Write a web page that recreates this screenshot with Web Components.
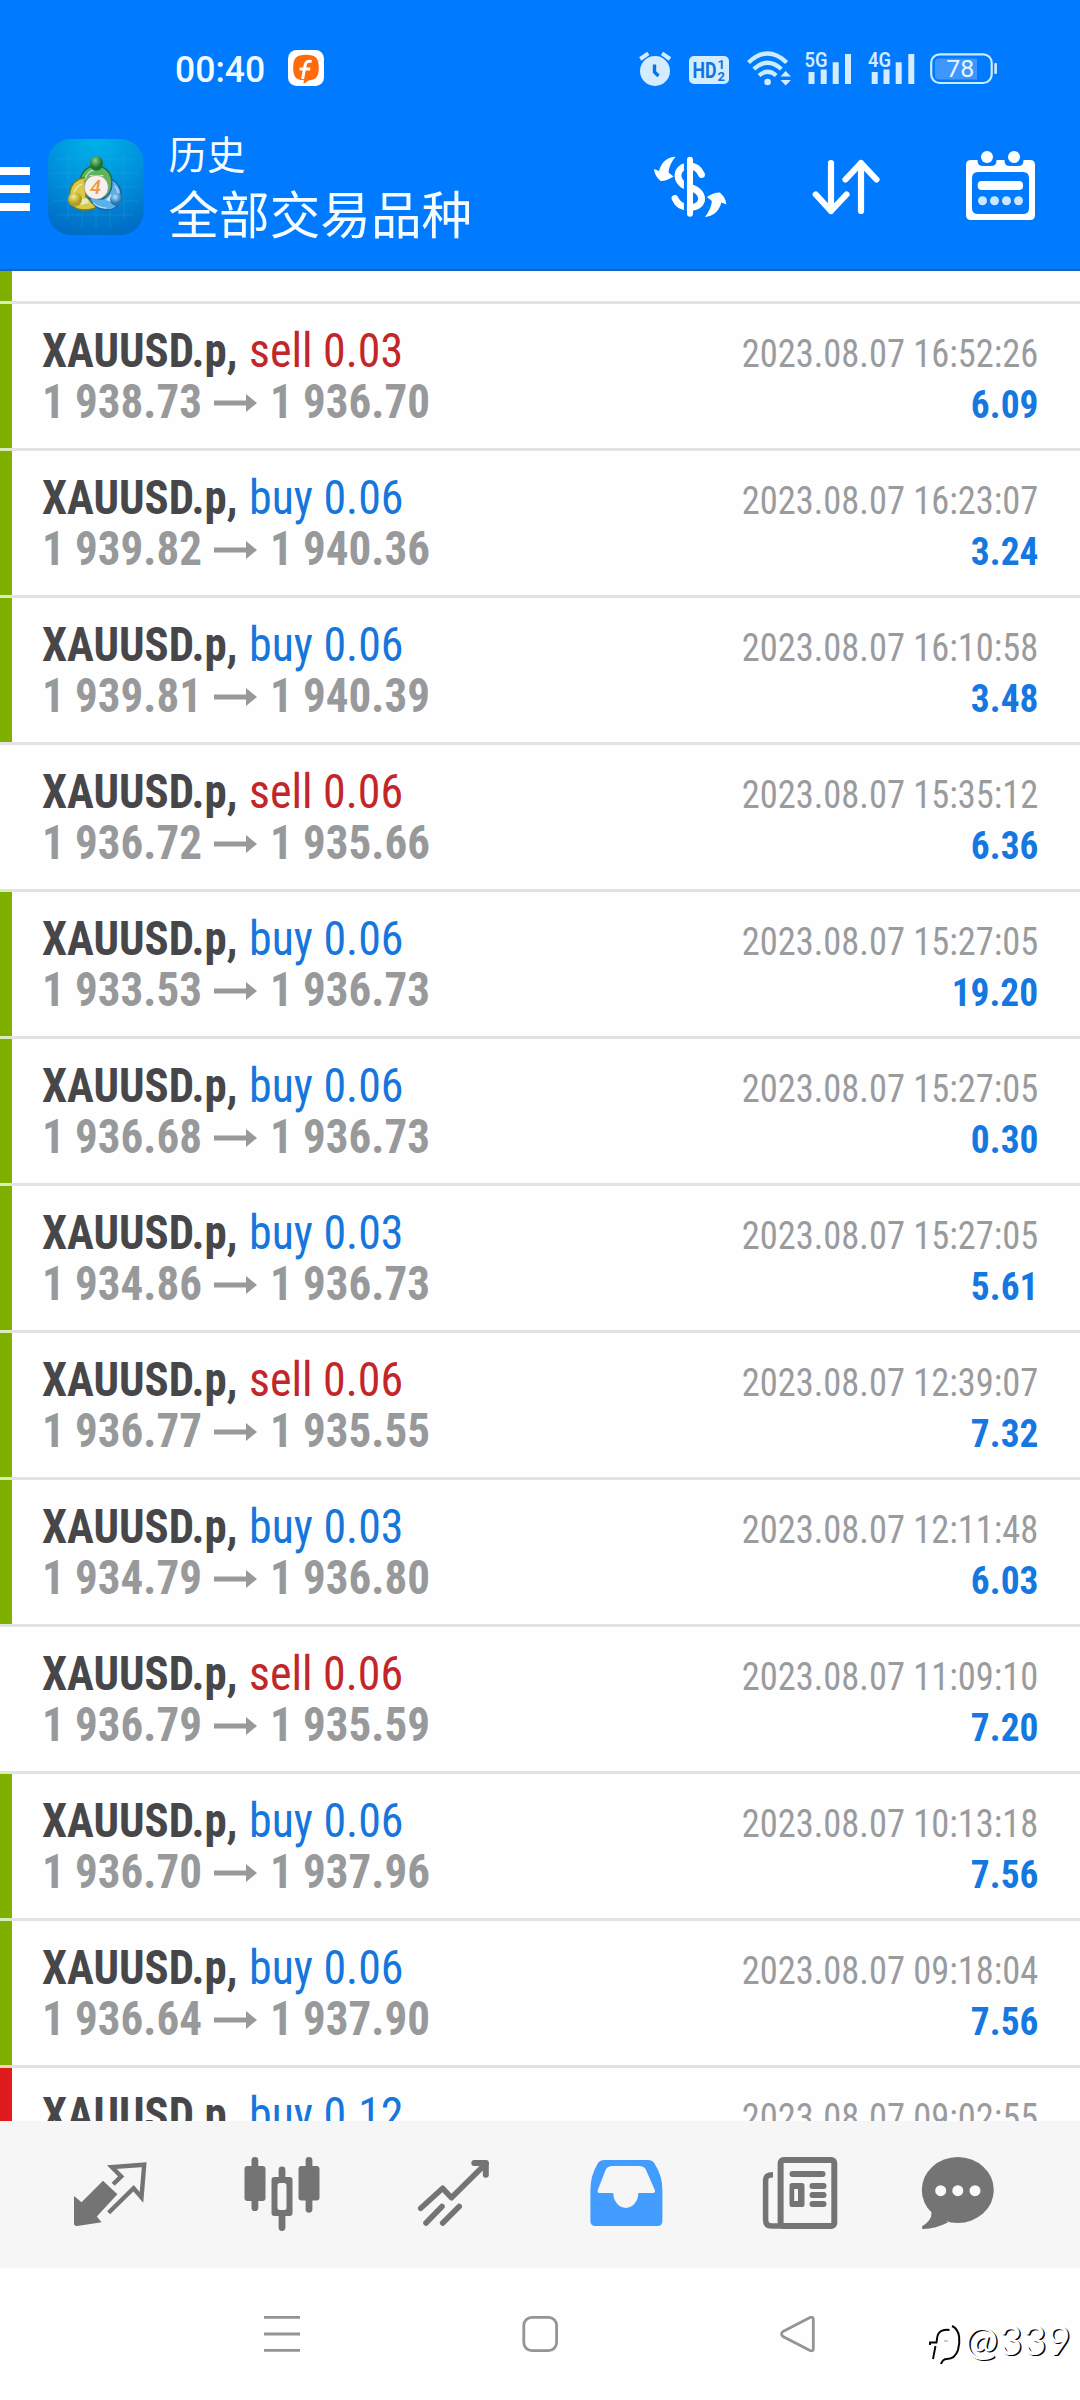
<!DOCTYPE html>
<html lang="zh-CN">
<head>
<meta charset="utf-8">
<title>历史</title>
<style>
html,body{margin:0;padding:0}
body{width:1080px;height:2400px;overflow:hidden;background:#fefefe;font-family:Roboto,"Noto Sans CJK SC",sans-serif}
</style>
</head>
<body>
<history-app></history-app>
<script>
const FONT = '"Roboto Condensed",Roboto,sans-serif';

// Horizontal scale for each text style, from a sample string and the ink width it should have.
const STYLES = {
  sym:   {weight:700, size:48, sample:'XAUUSD.p,', ink:193},
  side:  {weight:400, size:48, sample:'buy 0.06', ink:150},
  price: {weight:700, size:48, sample:'1 938.73', ink:155},
  date:  {weight:400, size:39, sample:'2023.08.07 16:52:26', ink:294.5},
  sum:   {weight:700, size:39, sample:'6.09', ink:65}
};
const ctx = document.createElement('canvas').getContext('2d');
for (const s of Object.values(STYLES)) {
  ctx.font = `${s.weight} ${s.size}px ${FONT}`;
  if ('fontStretch' in ctx) ctx.fontStretch = 'condensed';
  const m = ctx.measureText(s.sample);
  s.scale = s.ink / (m.actualBoundingBoxLeft + m.actualBoundingBoxRight);
}

function define(name, html) {
  customElements.define(name, class extends HTMLElement {
    constructor() {
      super();
      this.attachShadow({mode:'open'}).innerHTML = typeof html === 'function' ? '' : html;
    }
    connectedCallback() {
      if (typeof html === 'function') this.shadowRoot.innerHTML = html(this);
    }
  });
}

define('condensed-text', el => {
  const s = STYLES[el.getAttribute('kind')];
  return `<style>
    :host{display:block;white-space:pre;font:${s.weight} ${s.size}px/51px ${FONT};font-stretch:75%}
    span{display:inline-block;transform:scaleX(${s.scale.toFixed(4)});transform-origin:var(--origin,left) center}
  </style><span><slot></slot></span>`;
});

define('status-bar', `<style>
  :host{display:flex;height:136px;box-sizing:border-box;padding-top:40px}
  .time{width:112px;margin-left:175px;font:500 37px/60px Roboto,sans-serif;color:#f2faff}
  .time span{display:inline-block;transform:scaleX(.96);transform-origin:left}
  svg{display:block;flex:none}
  .badge{margin:9px 0 0 0}
  .sys{margin-left:295px}
  text{font-family:Roboto,sans-serif}
</style>
<div class="time"><span>00:40</span></div>
<svg class="badge" width="38" height="38" viewBox="287 49 38 38">
  <rect x="288" y="50" width="36" height="36" rx="8.5" fill="#fff"/>
  <path d="M306 54.800c9.500 0 12.800 3.200 12.800 12.700s-3.300 12.700-9.800 12.700l-5.500 3.800.5-3.700c-8.300 0-10.800-3.800-10.800-12.800 0-9.500 3.300-12.700 12.800-12.700z" fill="#ff6a0c"/>
  <path d="M311.600 61.500c-3.800-1.100-5.800.4-6.500 4L302.600 79M299.600 69h10.600" fill="none" stroke="#fff" stroke-width="3"/>
</svg>
<svg class="sys" width="390" height="60" viewBox="620 40 390 60">
  <g fill="#d5ecff">
    <circle cx="655" cy="71" r="15"/>
    <path d="M640.300 59l8-5.700M662 53.300l8 5.700" stroke="#d5ecff" stroke-width="4"/>
    <path d="M654.500 64.500v7.500l4 4" fill="none" stroke="#0a72ea" stroke-width="3.400"/>
    <rect x="689" y="56" width="40" height="28" rx="5"/>
    <g fill="#0f74e6"><text x="692.500" y="78" font-size="22.500" font-weight="700" textLength="24" lengthAdjust="spacingAndGlyphs">HD</text>
    <text x="717.500" y="69.200" font-size="13" font-weight="700">1</text><text x="717.500" y="80.500" font-size="13" font-weight="700">2</text></g>
    <circle cx="767.600" cy="82" r="3.300"/>
    <g fill="none" stroke="#c9ecff" stroke-width="4.200"><path d="M748.500 62.500q19.100-18 38.200 0"/><path d="M753.800 69q13.800-12.500 27.600 0"/><path d="M759 75.500q8.600-7.500 17.200 0"/></g>
    <path d="M780.500 76.500l5.200-5.500 5.200 5.500zM780.500 80l5.200 5.500 5.200-5.500z"/>
    <path d="M808.500 72h6v12h-6zM820.700 69.500h6V84h-6zM832.700 62.300h6V84h-6zM845 54h6v30h-6zM871.700 72h6v12h-6zM883.500 69.500h6V84h-6zM895.700 62.300h6V84h-6zM908.300 54h6v30h-6z"/>
    <g font-size="20.500" font-weight="600"><text x="804.500" y="66.800" textLength="23" lengthAdjust="spacingAndGlyphs">5G</text><text x="868" y="66.800" textLength="23" lengthAdjust="spacingAndGlyphs">4G</text></g>
    <rect x="931.200" y="54.300" width="60.500" height="28.700" rx="8.500" fill="none" stroke="#c9ecff" stroke-width="2.200"/>
    <rect x="994.300" y="63" width="2.600" height="11" rx="1"/>
    <path d="M939 58.500h38v21h-38q-4 0-4-4v-13q0-4 4-4z" fill="#3d97ff"/>
    <text x="946.300" y="77.300" font-size="24.500" font-weight="400" fill="#eaf6ff" textLength="28" lengthAdjust="spacingAndGlyphs">78</text>
  </g>
</svg>`);

define('app-bar', `<style>
  :host{display:flex;height:135px;box-sizing:border-box;border-bottom:2px solid #1467b9}
  svg{display:block;flex:none}
  .titles{width:471.500px;margin-left:24.500px;color:#f5fcff;font-family:"Noto Sans CJK SC",sans-serif}
  .a{font-size:38.500px;line-height:40px;margin-top:-4px}
  .b{font-size:50.600px;line-height:60px;margin-top:10px;white-space:nowrap}
</style>
<svg width="144" height="133" viewBox="0 136 144 133">
  <defs>
    <radialGradient id="bg" cx=".5" cy="0" r="1.100"><stop offset="0" stop-color="#00b2ea"/><stop offset=".5" stop-color="#0090dc"/><stop offset="1" stop-color="#0065c0"/></radialGradient>
    <radialGradient id="g" cx=".4" cy=".3"><stop offset="0" stop-color="#8fd08c"/><stop offset="1" stop-color="#18752e"/></radialGradient>
    <radialGradient id="y" cx=".4" cy=".3"><stop offset="0" stop-color="#f6eb8c"/><stop offset="1" stop-color="#b39c20"/></radialGradient>
    <radialGradient id="b" cx=".4" cy=".3"><stop offset="0" stop-color="#b5e2fa"/><stop offset="1" stop-color="#1d76b8"/></radialGradient>
  </defs>
  <path d="M0 167h30v8H0zM0 185h30v8H0zM0 203h30v8H0z" fill="#fff"/>
  <rect x="48" y="139" width="95.500" height="96" rx="23" fill="url(#bg)"/>
  <path d="M68 155v66M82 148v80M96 148v80M110 148v80M124 155v66M57 159h77M52 173h87M52 187h87M52 201h87M57 215h77" stroke="#37b9e8" stroke-opacity=".22" fill="none"/>
  <g stroke-linejoin="round">
    <path d="M80 184c0-12 7-18 16-18s16 6 16 18c0 7-2 12-6 15l-9-10-10 1z" fill="#5fb35d" stroke="#1b6b35" stroke-width="1.400"/>
    <path d="M85 177.500q-13 2-15 14c-2 14 5 18.500 14 18.500 7 0 11-1 14-4l-12-9z" fill="#d9c944" stroke="#6f7b20" stroke-width="1.400"/>
    <path d="M111.500 179c6 4 9.500 9 9.500 15 0 11-6 16-14 16s-15-5-18-12l14 1c7-4 10-10 8.500-20z" fill="#5cb2e8" stroke="#1764a5" stroke-width="1.400"/>
    <path d="M85 180q2-9 9-10M74 193q2-7 8-9M115 186q4 5 3 10M93 203q6 5 13 5" fill="none" stroke="#fff" stroke-opacity=".5" stroke-width="1.600"/>
  </g>
  <path d="M89 175h15l-7.500 6zM78 200l9-2 2 5-8 2zM106 200l5-6 3 9z" fill="#e6f2e8" fill-opacity=".8"/>
  <ellipse cx="96.500" cy="163.500" rx="6.500" ry="7.300" fill="url(#g)"/>
  <circle cx="75" cy="199.500" r="7" fill="url(#y)"/><circle cx="116.500" cy="199.500" r="6.500" fill="url(#b)"/>
  <circle cx="96.300" cy="187.300" r="12" fill="#f4f0ee" stroke="#987" stroke-width=".6"/>
  <text x="95.500" y="194.300" text-anchor="middle" font-family="Roboto,sans-serif" font-size="20" font-weight="500" font-style="italic" fill="#ef9b45">4</text>
</svg>
<div class="titles"><div class="a">历史</div><div class="b">全部交易品种</div></div>
<svg width="440" height="133" viewBox="640 136 440 133">
  <g fill="none" stroke="#fff" stroke-linecap="round" stroke-linejoin="round">
    <path d="M701.500 174.500c-2.500-6-6.500-8.500-12-8.500-15 0-15 17-2 20.500 19 4 18 21 2 21-7 0-12-3-14.500-9" stroke-width="6.800"/>
    <path d="M685.400 158v56" stroke="#007aff" stroke-width="3" stroke-linecap="butt"/>
    <path d="M690 159.700v54" stroke-width="6"/>
    <path d="M831 163v48M815.800 194.500L831 211l15.500-16.500M861 211v-48M845.500 179.500L861 163l15.500 16.500" stroke-width="6.200"/>
  </g>
  <g fill="#fff">
    <path id="ar" d="M675.500 156.700c-8 .3-14 5-16.500 14.300l-5-2c.3 5 3 9 6.500 12 5 0 9-2 13-4.500l-5-4c.5-6 3-11 7-15.800z"/>
    <use href="#ar" transform="rotate(180 690.200 186.800)"/>
    <path fill-rule="evenodd" d="M971 160h59q5 0 5 5v50q0 5-5 5h-59q-5 0-5-5v-50q0-5 5-5zM978 172q-6 0-6 6v30q0 6 6 6h45q6 0 6-6v-30q0-6-6-6z"/>
    <path d="M977.500 159v1.500q0 5.500 5.500 5.500h8q5.500 0 5.500-5.500V159zM1004.500 159v1.500q0 5.500 5.500 5.500h8q5.500 0 5.500-5.500V159z" fill="#007aff"/>
    <circle cx="987" cy="157" r="6"/><circle cx="1014" cy="157" r="6"/>
    <rect x="977.700" y="181" width="45.300" height="9" rx="4"/>
    <g fill="#cde6ff"><circle cx="982.500" cy="200.700" r="4.500"/><circle cx="994.500" cy="200.700" r="4.500"/><circle cx="1006.500" cy="200.700" r="4.500"/><circle cx="1018.500" cy="200.700" r="4.500"/></g>
  </g>
</svg>`);

define('deal-row', el => {
  const a = n => el.getAttribute(n);
  const side = a('side');
  const mark = {g:['#7fb000','#dbebb9'], r:['#e01b1e','#f4cfc4']}[a('mark')] || ['transparent','#e3e3e3'];
  return `<style>
    :host{display:grid;grid-template-columns:12px 1fr;grid-template-rows:3px 144px;flex:none;height:147px;background:linear-gradient(#e3e3e3,#e3e3e3) 0 0/100% 3px no-repeat,#fefefe}
    .cap{background:${mark[1]}}
    .bar{background:${mark[0]};grid-row:2}
    .body{grid-row:2;grid-column:2;padding:21px 42px 0 30px}
    .line{display:flex;align-items:baseline;height:51px}
    .sym{width:206.500px;color:#47474a}
    .side{color:${side === 'buy' ? '#1676dc' : '#c32628'}}
    .p{width:172px;color:#97999b}
    svg{width:43px;height:18px;margin:18px 12.500px 0 0;align-self:flex-start;display:block}
    .end{margin-left:auto;--origin:right}
    .date{color:#999b9d}
    .sum{color:#1577e0}
  </style>
  <div class="cap"></div><div class="bar"></div>
  <div class="body">
    <div class="line"><condensed-text kind="sym" class="sym">${a('sym')},</condensed-text><condensed-text kind="side" class="side">${side} ${a('vol')}</condensed-text><condensed-text kind="date" class="date end">2023.08.07 ${a('time')}</condensed-text></div>
    ${a('open') ? `<div class="line"><condensed-text kind="price" class="p">${a('open')}</condensed-text><svg viewBox="0 0 43 18"><path d="M0 6.500h32V0L43 9 32 18v-6.500H0z" fill="#97999b"/></svg><condensed-text kind="price" class="p">${a('close')}</condensed-text><condensed-text kind="sum" class="sum end">${a('sum')}</condensed-text></div>` : ''}
  </div>`;
});

const DEALS = [
  ['sell','0.03','1 938.73','1 936.70','16:52:26','6.09','g'],
  ['buy','0.06','1 939.82','1 940.36','16:23:07','3.24','g'],
  ['buy','0.06','1 939.81','1 940.39','16:10:58','3.48','g'],
  ['sell','0.06','1 936.72','1 935.66','15:35:12','6.36',''],
  ['buy','0.06','1 933.53','1 936.73','15:27:05','19.20','g'],
  ['buy','0.06','1 936.68','1 936.73','15:27:05','0.30','g'],
  ['buy','0.03','1 934.86','1 936.73','15:27:05','5.61','g'],
  ['sell','0.06','1 936.77','1 935.55','12:39:07','7.32','g'],
  ['buy','0.03','1 934.79','1 936.80','12:11:48','6.03','g'],
  ['sell','0.06','1 936.79','1 935.59','11:09:10','7.20',''],
  ['buy','0.06','1 936.70','1 937.96','10:13:18','7.56','g'],
  ['buy','0.06','1 936.64','1 937.90','09:18:04','7.56','g'],
  ['buy','0.12','','','09:02:55','','r']
];
define('deal-list', () => `<style>
  :host{display:flex;flex-direction:column;height:1850px;overflow:hidden;background:#fefefe}
  .rest{flex:none;height:30px;width:12px;background:#7fb000}
</style><div class="rest"></div>` + DEALS.map(d =>
  `<deal-row sym="XAUUSD.p" side="${d[0]}" vol="${d[1]}" open="${d[2]}" close="${d[3]}" time="${d[4]}" sum="${d[5]}" mark="${d[6]}"></deal-row>`).join(''));

define('tab-bar', `<style>
  :host{display:flex;height:147px;background:#f6f6f6;padding:34px 74px 0;box-sizing:border-box;align-items:flex-start;color:#747474;gap:99.500px}
  svg{display:block;flex:none;overflow:visible}
</style>
<svg width="72" height="80" viewBox="74 2155 72 80"><path d="M75 2196.700l6.500 5.500 21.500-21.500 14.400 13.500-20.600 22.300 4.800 5.700-24.300 3.700q-3.300.3-3.300-2.700v-25.500q0-2 1-1z" fill="currentColor"/><path d="M113.200 2184.300l8-7.900-9.300-9.300 32.300-2.400-2.700 32.700-7.900-9.100-25 24.500" fill="none" stroke="currentColor" stroke-width="4.400"/></svg>
<svg width="75" height="80" viewBox="245.500 2155 75 80"><g fill="currentColor"><rect x="244" y="2166" width="21" height="35" rx="3"/><rect x="298" y="2166" width="21" height="34.500" rx="3"/><path fill-rule="evenodd" d="M274 2177h15q3 0 3 3v33q0 3-3 3h-15q-3 0-3-3v-33q0-3 3-3zm5.500 6q-2.500 0-2.500 2.500v22q0 2.500 2.500 2.500h4q2.500 0 2.500-2.500v-22q0-2.500-2.500-2.500z"/></g><path d="M254.400 2160.300v47.400M308.500 2160.300v49M281.500 2170v8M281.500 2216v11.500" stroke="currentColor" stroke-width="6.800" stroke-linecap="round"/></svg>
<svg width="72" height="80" viewBox="420 2155 72 80"><g fill="none" stroke="currentColor" stroke-width="5.600" stroke-linecap="round" stroke-linejoin="round"><path d="M420.700 2208.300l22-20 8.700 9.400 34.600-34.200"/><path d="M474.300 2163h11.500v11.800" stroke-width="6"/><path d="M426 2223l16-16.500M442.700 2223l16.500-16.500"/></g></svg>
<svg width="73" height="80" viewBox="592.200 2155 73 80"><path fill="#429dff" fill-rule="evenodd" d="M605 2160h43q5 0 7 4 7.600 12 7.600 26v31q0 5-5 5h-62q-5 0-5-5v-31q0-14 7-26 2-4 7.400-4zM613 2166h26q5.500 0 7 3.500l9 20.500q1 3-2 3h-14.500a12.500 15 0 0 1-25 0H600q-3 0-2-3l8-20.500q1.500-3.500 7-3.500z"/></svg>
<svg width="75" height="80" viewBox="764 2155 75 80"><g fill="none" stroke="currentColor" stroke-width="6"><rect x="780.600" y="2160" width="53.700" height="66" rx="3"/><path d="M773 2174.700q-7.400 0-7.400 5V2220q0 6 6 6h12" stroke-width="5.500"/><path d="M792.500 2174h30M812.500 2186h11M812.500 2195h11M812.500 2204h11" stroke-linecap="round"/></g><path fill="currentColor" fill-rule="evenodd" d="M792 2183h10q2.500 0 2.500 2.500v19q0 2.500-2.500 2.500h-10q-2.500 0-2.500-2.500v-19q0-2.500 2.500-2.500zm2.200 6v12h3.800v-12z"/></svg>
<svg width="84" height="80" viewBox="913 2155 84 80" style="margin-left:-26px"><g fill="currentColor"><ellipse cx="957.800" cy="2190" rx="36" ry="33"/><path d="M928 2205q5 4 3 12-3 6-8.500 9-1.500 2.500 1 3 12-.5 24.500-6.500z"/></g><g fill="#fafafa"><circle cx="940.700" cy="2190.700" r="5.500"/><circle cx="957.800" cy="2190.700" r="5.500"/><circle cx="975" cy="2190.700" r="5.500"/></g></svg>`);

define('system-nav', `<style>
  :host{display:flex;height:132px;background:#fefefe}
  svg{display:block}
  text{font:400 40px Lato,sans-serif;fill:#fff;text-shadow:1.500px 1px 0 #000}
</style>
<svg width="1080" height="132" viewBox="0 2268 1080 132">
  <g fill="none" stroke="#949494" stroke-width="2.800"><path d="M264 2317.300h36M264 2334h36M264 2350.300h36"/><rect x="523.800" y="2317.300" width="32.800" height="33.300" rx="8"/><path d="M783 2331.500l27-14q3.300-1.300 3.300 2v29q0 3.300-3.300 2l-27-14q-3-2.500 0-5z"/></g>
  <g fill="none" stroke="#000"><path d="M949.500 2330c-8-1-12 2-12.500 9l-.5 3.500h-6.500v2.500M935.500 2346l-2.500 13" stroke-width="1.900"/><path d="M952 2326c9 4 8 17 6 24-2 6-6 9-11 9-3 0-5 2-6 5" stroke-width="2"/><path d="M944 2341h4" stroke="#999" stroke-width="1"/></g>
  <text x="964.500" y="2354.500" textLength="106" lengthAdjust="spacing">@339</text>
</svg>`);

define('history-app', `<style>
  :host{display:flex;flex-direction:column;width:1080px;height:2400px;overflow:hidden}
  header{background:#007aff;height:271px;flex:none}
</style>
<header><status-bar></status-bar><app-bar></app-bar></header>
<deal-list></deal-list>
<tab-bar></tab-bar>
<system-nav></system-nav>`);
</script>
</body>
</html>
